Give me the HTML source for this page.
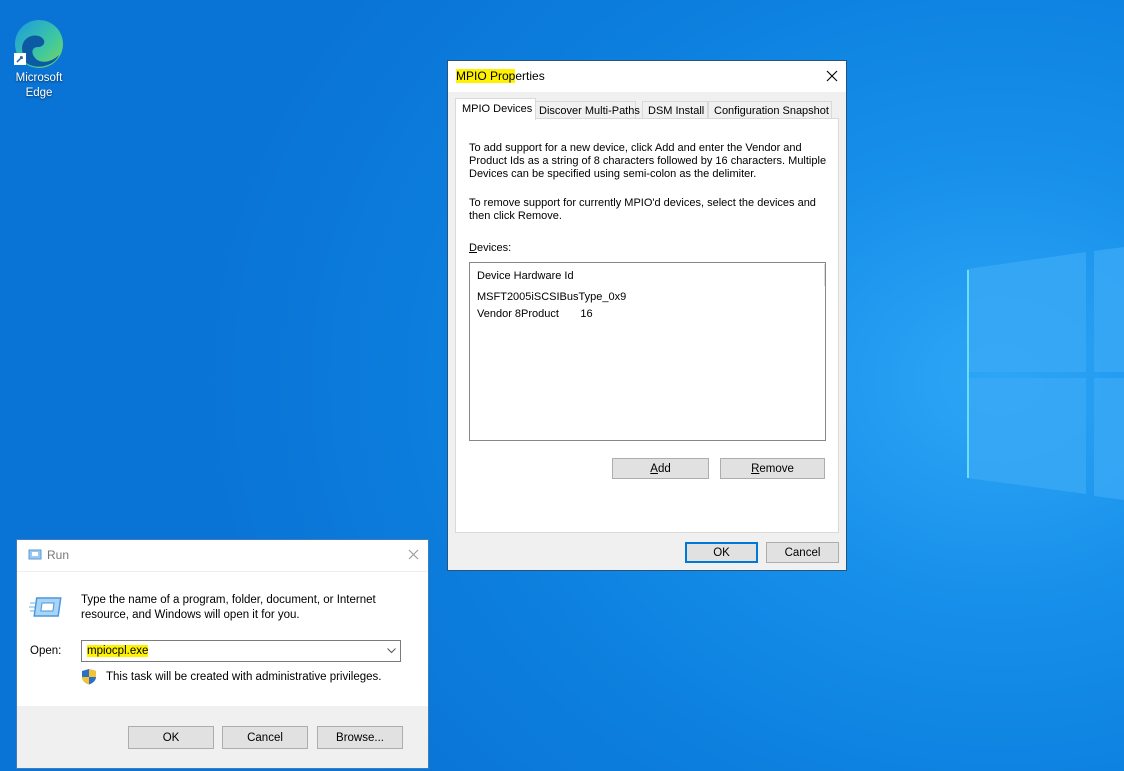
<!DOCTYPE html>
<html><head><meta charset="utf-8"><style>
*{box-sizing:border-box;margin:0;padding:0}
body{width:1124px;height:771px;overflow:hidden;position:relative;font-family:"Liberation Sans",sans-serif;font-size:11px;color:#000;
background:radial-gradient(ellipse 800px 650px at 1000px 380px,#2ea6f6 0%,#168fea 35%,#0c7edd 70%,#0a74d6 100%);}
.abs{position:absolute}
.btn{position:absolute;background:#e1e1e1;border:1px solid #adadad;text-align:center;font-size:11.5px;}
.t{position:absolute;white-space:nowrap;font-size:11px;line-height:13px}
.hl{background:#fff200}
</style></head><body>
<svg class="abs" style="left:0;top:0" width="1124" height="771">
<polygon points="967,269 1086,252 1086,372 967,372" fill="#3aa9f5" opacity=".8"/>
<polygon points="1094,251 1124,247 1124,372 1094,372" fill="#3aa9f5" opacity=".8"/>
<polygon points="967,378 1086,378 1086,494 967,478" fill="#3aa9f5" opacity=".8"/>
<polygon points="1094,378 1124,378 1124,500 1094,496" fill="#3aa9f5" opacity=".8"/>
<line x1="968" y1="270" x2="968" y2="478" stroke="#7ff0ff" stroke-width="1.5"/>
</svg>
<svg class="abs" style="left:14px;top:19px" width="50" height="50" viewBox="0 0 50 50">
<defs><linearGradient id="g" x1="0" y1="0" x2="1" y2="1"><stop offset="0" stop-color="#1a9be0"/><stop offset=".6" stop-color="#3fc7a0"/><stop offset="1" stop-color="#7ad85a"/></linearGradient></defs>
<circle cx="25" cy="25" r="24" fill="url(#g)"/>
<path d="M8 30 C8 18 20 14 27 18 C33 22 30 28 24 28 C18 28 16 34 22 40 C28 45 38 43 45 36 C40 48 20 52 10 42 Z" fill="#0c59a4"/>
<rect x="0" y="34" width="12" height="12" fill="#fff"/><path d="M3 43 L8 38 M6 38 L8 38 L8 40" stroke="#1d5fa8" stroke-width="1.5" fill="none"/>
</svg>
<div class="abs" style="left:0;top:71px;width:78px;text-align:center;color:#fff;font-size:11.5px;line-height:15px;text-shadow:0 1px 2px rgba(0,0,0,.6)">Microsoft<br>Edge</div>

<div class="abs" style="left:447px;top:60px;width:400px;height:511px;background:#f0f0f0;border:1px solid #24557f">
 <div class="abs" style="left:0;top:0;width:398px;height:31px;background:#fff"></div>
 <div class="t" style="left:8px;top:9px;font-size:12px"><span class="hl">MPIO Prop</span>erties</div>
 <svg class="abs" style="left:378px;top:9px" width="12" height="12"><path d="M1 1L11 11M11 1L1 11" stroke="#000" stroke-width="1.1"/></svg>
 <div class="abs" style="left:84px;top:40px;width:104px;height:18px;border:1px solid #d9d9d9;background:#f0f0f0"></div>
 <div class="t" style="left:91px;top:44px">Discover Multi-Paths</div>
 <div class="abs" style="left:194px;top:40px;width:66px;height:18px;border:1px solid #d9d9d9"></div>
 <div class="t" style="left:200px;top:44px">DSM Install</div>
 <div class="abs" style="left:260px;top:40px;width:124px;height:18px;border:1px solid #d9d9d9"></div>
 <div class="t" style="left:266px;top:44px">Configuration Snapshot</div>
 <div class="abs" style="left:7px;top:57px;width:384px;height:415px;background:#fff;border:1px solid #d9d9d9"></div>
 <div class="abs" style="left:7px;top:37px;width:81px;height:22px;background:#fff;border:1px solid #d9d9d9;border-bottom:none"></div>
 <div class="t" style="left:14px;top:42px">MPIO Devices</div>
 <div class="t" style="left:21px;top:81px">To add support for a new device, click Add and enter the Vendor and<br>Product Ids as a string of 8 characters followed by 16 characters. Multiple<br>Devices can be specified using semi-colon as the delimiter.</div>
 <div class="t" style="left:21px;top:136px">To remove support for currently MPIO'd devices, select the devices and<br>then click Remove.</div>
 <div class="t" style="left:21px;top:181px"><u>D</u>evices:</div>
 <div class="abs" style="left:21px;top:201px;width:357px;height:179px;border:1px solid #828790;background:#fff"></div>
 <div class="abs" style="left:376px;top:203px;width:1px;height:22px;background:#ddd"></div>
 <div class="t" style="left:29px;top:209px">Device Hardware Id</div>
 <div class="t" style="left:29px;top:230px">MSFT2005iSCSIBusType_0x9</div>
 <div class="t" style="left:29px;top:247px">Vendor 8Product&nbsp;&nbsp;&nbsp;&nbsp;&nbsp;&nbsp; 16</div>
 <div class="btn" style="left:164px;top:397px;width:97px;height:21px;line-height:20px"><u>A</u>dd</div>
 <div class="btn" style="left:272px;top:397px;width:105px;height:21px;line-height:20px"><u>R</u>emove</div>
 <div class="btn" style="left:237px;top:481px;width:73px;height:21px;line-height:19px;border:2px solid #0078d7">OK</div>
 <div class="btn" style="left:318px;top:481px;width:73px;height:21px;line-height:21px">Cancel</div>
</div>

<div class="abs" style="left:16px;top:539px;width:413px;height:230px;background:#f0f0f0;border:1px solid #3c7dbb">
 <div class="abs" style="left:0;top:0;width:411px;height:166px;background:#fff"></div>
 <div class="abs" style="left:0;top:31px;width:411px;height:1px;background:#eee"></div>
 <svg class="abs" style="left:9px;top:9px" width="16" height="11"><rect x="3" y="1" width="12" height="9" fill="#9cc7ee" stroke="#5a9bd8"/><rect x="6" y="3" width="6" height="4" fill="#fff"/></svg>
 <div class="t" style="left:30px;top:9px;font-size:12px;color:#777">Run</div>
 <svg class="abs" style="left:391px;top:9px" width="11" height="11"><path d="M1 1L10 10M10 1L1 10" stroke="#999" stroke-width="1.1"/></svg>
 <svg class="abs" style="left:12px;top:56px" width="34" height="22"><rect x="8" y="2" width="24" height="18" fill="#a8d4f7" stroke="#4a97dc" stroke-width="1.5" transform="skewX(-8)"/><rect x="14" y="7" width="12" height="8" fill="#fff" stroke="#4a97dc" transform="skewX(-8)"/><path d="M1 7h6M0 11h6M1 15h6" stroke="#6aafe6"/></svg>
 <div class="t" style="left:64px;top:53px;font-size:11.5px;line-height:15px">Type the name of a program, folder, document, or Internet<br>resource, and Windows will open it for you.</div>
 <div class="t" style="left:13px;top:105px;font-size:11.5px">Open:</div>
 <div class="abs" style="left:64px;top:100px;width:320px;height:22px;border:1px solid #7a7a7a;background:#fff"></div>
 <div class="t" style="left:70px;top:105px;font-size:11.5px"><span class="hl">mpiocpl.exe</span></div>
 <svg class="abs" style="left:370px;top:108px" width="9" height="6"><path d="M0.5 0.5L4.5 4.5L8.5 0.5" stroke="#555" fill="none"/></svg>
 <svg class="abs" style="left:64px;top:128px" width="16" height="17"><path d="M8 1 L15 3 V9 C15 13 11 15.5 8 16.5 C5 15.5 1 13 1 9 V3 Z" fill="#2b6fc7"/><path d="M8 1 L15 3 V9 H8 Z M8 9 V16.5 C5 15.5 1 13 1 9 Z" fill="#f5c231"/></svg>
 <div class="t" style="left:89px;top:131px;font-size:11.5px">This task will be created with administrative privileges.</div>
 <div class="btn" style="left:111px;top:186px;width:86px;height:23px;line-height:22px">OK</div>
 <div class="btn" style="left:205px;top:186px;width:86px;height:23px;line-height:22px">Cancel</div>
 <div class="btn" style="left:300px;top:186px;width:86px;height:23px;line-height:22px">Browse...</div>
</div>
</body></html>
